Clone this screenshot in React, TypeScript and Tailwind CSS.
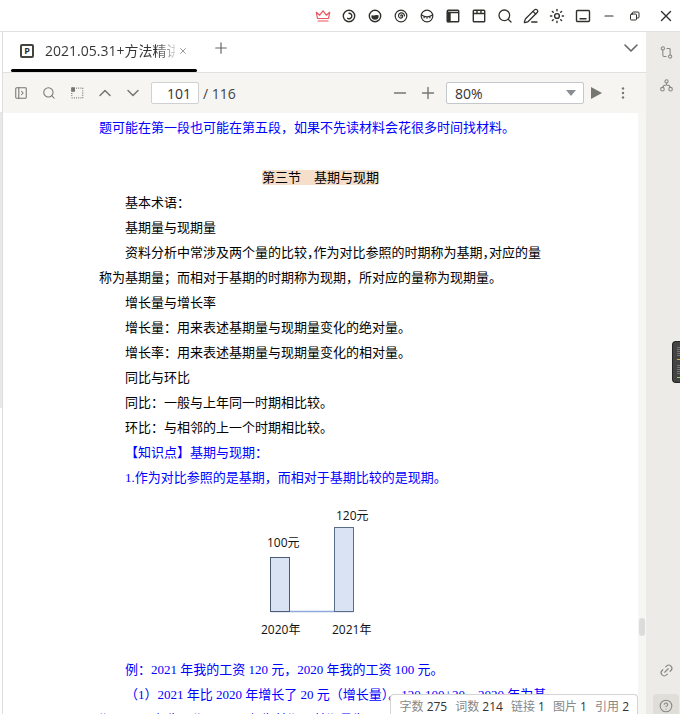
import React, { useState } from 'react';
import { ChevronDown, ChevronUp, CircleHelp, Link2, PencilLine, Plus, Search, X } from 'lucide-react';

interface IconProps {
    children: React.ReactNode;
    size?: number;
    stroke?: number;
}

interface IconButtonProps {
    label: string;
    children: React.ReactNode;
    className?: string;
}

// 16x16 line drawing that takes the colour of its button
function Icon({ children, size = 16, stroke = 1.4 }: IconProps) {
    return (
        <svg
            width={size}
            height={size}
            viewBox="0 0 16 16"
            fill="none"
            stroke="currentColor"
            strokeWidth={stroke}
            strokeLinecap="round"
            strokeLinejoin="round"
        >
            {children}
        </svg>
    );
}

function IconButton({ label, children, className = '' }: IconButtonProps) {
    return (
        <button
            type="button"
            aria-label={label}
            title={label}
            className={`flex shrink-0 items-center justify-center ${className}`}
        >
            {children}
        </button>
    );
}

function TitleBar() {
    return (
        <header className="flex h-8 shrink-0 items-center justify-end border-b border-[#e0e0e0] bg-white pr-px text-[#30302c]">
            <IconButton label="会员" className="w-[26px] text-[#e8555c]">
                <Icon stroke={1.2}>
                    <path d="M2.500 10.500 1.300 4.300l3.400 2.900L8 2.800l3.300 4.400 3.400-2.900-1.200 6.200zM3 13h10" />
                </Icon>
            </IconButton>
            <IconButton label="夜间" className="w-[26px]">
                <Icon>
                    <circle cx="8" cy="8" r="5.700" />
                    <path d="M8 5.300a2.700 2.700 0 1 1-1.300 5" />
                </Icon>
            </IconButton>
            <IconButton label="半屏" className="w-[26px]">
                <Icon>
                    <circle cx="8" cy="8" r="5.700" />
                    <path d="M5 8q1.500.6 3 0t3 0a3 3 0 0 1-6 0z" fill="currentColor" />
                </Icon>
            </IconButton>
            <IconButton label="专注" className="w-[26px]">
                <Icon stroke={1.2}>
                    <circle cx="8" cy="8" r="5.800" />
                    <path d="M8 8.200c-.8-1.200.8-1.800 1.400-.8 1 1.600-.8 3.200-2.400 2.600-2.200-.8-2-4.500.8-5.100 2-.4 3.600 1 3.700 2.900" />
                </Icon>
            </IconButton>
            <IconButton label="护眼" className="w-[26px]">
                <Icon stroke={1.2}>
                    <circle cx="8" cy="8" r="5.800" />
                    <path d="M2.500 7q5.500 3.500 11 0M5.500 8.500l-.5 1.300M8 8.800v1.400M10.500 8.500l.5 1.300" />
                </Icon>
            </IconButton>
            <IconButton label="侧栏" className="w-[26px]">
                <Icon>
                    <rect x="2.300" y="2.300" width="11.400" height="11.400" rx=".8" />
                    <path d="M2.500 4.500h11" />
                    <path d="M2.500 4.500h2.500v9H2.500z" fill="currentColor" />
                </Icon>
            </IconButton>
            <IconButton label="多标签" className="w-[26px]">
                <Icon>
                    <rect x="2.300" y="2.300" width="11.400" height="11.400" rx=".8" />
                    <path d="M2.500 5.500h11M6 2.500v2.800M10 2.500v2.800" />
                </Icon>
            </IconButton>
            <IconButton label="搜索" className="w-[26px]">
                <Search size={16} strokeWidth={1.9} />
            </IconButton>
            <IconButton label="编辑" className="w-[26px]">
                <PencilLine size={16} strokeWidth={1.9} />
            </IconButton>
            <IconButton label="亮度" className="w-[26px]">
                <Icon>
                    <circle cx="8" cy="8" r="2.400" />
                    <path d="M8 1.500v1.300M8 13.200v1.300M1.500 8h1.300M13.200 8h1.300M3.400 3.400l.9.9M11.700 11.700l.9.9M3.400 12.600l.9-.9M11.700 4.300l.9-.9" />
                </Icon>
            </IconButton>
            <IconButton label="底栏" className="w-[26px]">
                <Icon>
                    <rect x="1.500" y="2.500" width="13" height="11" rx="1" />
                    <path d="M5 10.800h6" />
                </Icon>
            </IconButton>
            <IconButton label="最小化" className="w-[26px]">
                <Icon stroke={1.2}>
                    <path d="M4 8h8" />
                </Icon>
            </IconButton>
            <IconButton label="还原" className="w-[26px]">
                <Icon stroke={1}>
                    <rect x="3.500" y="6" width="6" height="6" rx="1" />
                    <path d="M5.500 6V5q0-1 1-1h4.500q1 0 1 1v4q0 1-1 1h-1.500" />
                </Icon>
            </IconButton>
            <IconButton label="关闭" className="ml-[5px] w-[26px]">
                <Icon>
                    <path d="m3.500 3.500 9 9M12.500 3.500l-9 9" />
                </Icon>
            </IconButton>
        </header>
    );
}

function TabBar() {
    return (
        <div className="flex h-10 shrink-0 items-stretch bg-white pl-2">
            <div className="flex w-[186px] flex-col">
                <div className="flex flex-1 items-center pr-[6px] pl-[9px]">
                    <span className="flex size-[14px] shrink-0 items-center justify-center rounded-xs border-2 border-[#44443f] text-[9px] leading-none font-bold text-[#30302c]">
                        P
                    </span>
                    <span className="ml-[11px] flex-1 overflow-hidden bg-linear-to-r from-[#333] from-85% to-[#ddd] bg-clip-text text-[14px] whitespace-nowrap text-transparent">
                        2021.05.31+方法精讲
                    </span>
                    <IconButton label="关闭标签" className="w-4 text-[#888]">
                        <X size={10} />
                    </IconButton>
                </div>
                <div className="h-[3px] rounded-full bg-black" />
            </div>
            <IconButton label="新建标签" className="mb-2 ml-3 w-6 text-[#666]">
                <Plus size={18} strokeWidth={1.6} />
            </IconButton>
            <IconButton label="全部标签" className="mr-[3px] mb-2 ml-auto w-6 text-[#666]">
                <ChevronDown size={24} strokeWidth={1.6} />
            </IconButton>
        </div>
    );
}

function Toolbar() {
    const [page, setPage] = useState('101');

    return (
        <div className="flex h-[41px] shrink-0 items-center border-t border-[#dfe0e0] bg-[#f6f5f2] pr-[13px] pl-1 text-[#777772]">
            <IconButton label="目录" className="w-7">
                <Icon size={14} stroke={1.2}>
                    <rect x="2" y="2" width="12" height="12" rx="1" />
                    <path d="M5.500 2v12M8.500 6l2 2-2 2" />
                </Icon>
            </IconButton>
            <IconButton label="查找" className="w-7">
                <Search size={14} strokeWidth={1.8} />
            </IconButton>
            <IconButton label="截图" className="w-7">
                <Icon size={14} stroke={1.4}>
                    <path d="M2 2h3v4H2z" fill="currentColor" />
                    <path d="M7 2.500h8M14.500 2.500v11M2 8v5.500M2 13.500h13" strokeDasharray="1 1.500" strokeLinecap="butt" />
                </Icon>
            </IconButton>
            <IconButton label="上一页" className="w-7">
                <ChevronUp size={20} strokeWidth={1.8} />
            </IconButton>
            <IconButton label="下一页" className="w-7">
                <ChevronDown size={20} strokeWidth={1.8} />
            </IconButton>
            <input
                aria-label="页码"
                value={page}
                onChange={(e) => setPage(e.target.value)}
                className="ml-1 h-[22px] w-12 rounded-xs border border-[#cfd1d2] bg-white pr-[7px] text-right text-[14px] text-[#333]"
            />
            <span className="ml-1 text-[14px] text-[#444]">/ 116</span>
            <div className="ml-auto flex items-center">
                <IconButton label="缩小" className="w-7">
                    <Icon stroke={1.4}>
                        <path d="M2.500 8h11" />
                    </Icon>
                </IconButton>
                <IconButton label="放大" className="w-7">
                    <Icon stroke={1.4}>
                        <path d="M2.500 8h11M8 2.500v11" />
                    </Icon>
                </IconButton>
                <div className="relative ml-1">
                    <select
                        aria-label="缩放"
                        defaultValue="80%"
                        className="h-[22px] w-[138px] appearance-none rounded-xs border border-[#c4c8cc] bg-white pl-2 text-[14px] text-[#333]"
                    >
                        <option>80%</option>
                        <option>100%</option>
                        <option>120%</option>
                    </select>
                    <svg className="pointer-events-none absolute top-[9px] right-2" width="10" height="6" viewBox="0 0 10 6">
                        <path d="M0 0h10L5 6z" fill="#8a8e92" />
                    </svg>
                </div>
                <IconButton label="朗读" className="w-6">
                    <svg width="12" height="12" viewBox="0 0 12 12">
                        <path d="M1 0 12 6 1 12z" fill="currentColor" />
                    </svg>
                </IconButton>
                <IconButton label="更多" className="ml-[5px] w-5">
                    <svg width="4" height="12" viewBox="0 0 4 12" fill="currentColor">
                        <circle cx="2" cy="1.500" r="1.200" />
                        <circle cx="2" cy="6" r="1.200" />
                        <circle cx="2" cy="10.500" r="1.200" />
                    </svg>
                </IconButton>
            </div>
        </div>
    );
}

// comma set in half the usual width
function HalfComma() {
    return <span className="[font-feature-settings:'halt']">，</span>;
}

function SalaryChart() {
    return (
        <svg
            width="120"
            height="132"
            viewBox="0 0 120 132"
            role="img"
            aria-label="2020年100元，2021年120元"
            className="mt-4 ml-[158px] font-['Open_Sans','Noto_Sans_CJK_SC',sans-serif] text-[12px]"
        >
            <path d="M14 105.500h82" stroke="#8faadc" strokeWidth="1.500" />
            <rect x="13.500" y="51.500" width="19" height="54" fill="#dae3f3" stroke="#4d5b73" />
            <rect x="77.500" y="21.500" width="19" height="84" fill="#dae3f3" stroke="#5a6c88" />
            <text x="10" y="41" fill="#111">100元</text>
            <text x="79" y="14" fill="#111">120元</text>
            <text x="4" y="128" fill="#111">2020年</text>
            <text x="75" y="128" fill="#111">2021年</text>
        </svg>
    );
}

function Document() {
    return (
        <main className="min-w-0 flex-1 overflow-hidden bg-white px-24 font-['Liberation_Serif','Noto_Sans_CJK_SC',serif] text-[13px] leading-[25px] whitespace-nowrap text-black">
            <p className="mt-[2px] text-[#0000ff]">题可能在第一段也可能在第五段，如果不先读材料会花很多时间找材料。</p>
            <h1 className="mt-[25px] text-center">
                <span className="rounded-xs bg-[#f6dfca]">第三节　基期与现期</span>
            </h1>
            <div className="pl-[26px]">
                <p>基本术语：</p>
                <p>基期量与现期量</p>
                <p>
                    资料分析中常涉及两个量的比较<HalfComma />作为对比参照的时期称为基期<HalfComma />对应的量
                </p>
            </div>
            <p>称为基期量；而相对于基期的时期称为现期，所对应的量称为现期量。</p>
            <div className="pl-[26px]">
                <p>增长量与增长率</p>
                <p>增长量：用来表述基期量与现期量变化的绝对量。</p>
                <p>增长率：用来表述基期量与现期量变化的相对量。</p>
                <p>同比与环比</p>
                <p>同比：一般与上年同一时期相比较。</p>
                <p>环比：与相邻的上一个时期相比较。</p>
                <p className="text-[#0000ff]">【知识点】基期与现期：</p>
                <p className="text-[#0000ff]">1.作为对比参照的是基期，而相对于基期比较的是现期。</p>
            </div>
            <SalaryChart />
            <div className="mt-[19px] text-[#0000ff]">
                <p className="pl-[26px]">例：2021 年我的工资 120 元，2020 年我的工资 100 元。</p>
                <p className="pl-[26px]">（1）2021 年比 2020 年增长了 20 元（增长量）。120-100+20，2020 年为基</p>
                <p>期，2021 年为现期，2020 年为基期，基期量为</p>
            </div>
        </main>
    );
}

const COUNTS = [
    { name: '字数', value: 275 },
    { name: '词数', value: 214 },
    { name: '链接', value: 1 },
    { name: '图片', value: 1 },
    { name: '引用', value: 2 },
];

function CountBar() {
    return (
        <div className="absolute right-2 bottom-0 flex h-5 items-start gap-2 overflow-hidden rounded-t border border-b-0 border-[#d4d4d4] bg-white pt-1 pr-2 pl-2 text-[12px] leading-4 whitespace-nowrap text-[#888]">
            {COUNTS.map((count) => (
                <span key={count.name}>
                    {count.name} <span className="text-[#333]">{count.value}</span>
                </span>
            ))}
        </div>
    );
}

function SideRail() {
    return (
        <aside className="relative flex w-[34px] shrink-0 flex-col items-center bg-[#ecebe7] pl-[6px] text-[#888883]">
            <IconButton label="反向链接" className="mt-3 h-4">
                <Icon size={13} stroke={1.3}>
                    <circle cx="3.500" cy="3" r="2" />
                    <circle cx="12.500" cy="13" r="2" />
                    <path d="M3.500 5v6.500q0 1.500 1.500 1.500h2.500M12.500 11V4.500q0-1.500-1.500-1.500H8.500" />
                </Icon>
            </IconButton>
            <IconButton label="关系图" className="mt-[17px] h-4">
                <Icon size={13} stroke={1.3}>
                    <circle cx="8" cy="3" r="2" />
                    <circle cx="3" cy="12.500" r="2.200" />
                    <circle cx="13" cy="12.500" r="2.200" />
                    <path d="M8 5v2.500M3.500 10q.5-2.500 4.500-2.500t4.500 2.500" />
                </Icon>
            </IconButton>
            <IconButton label="链接" className="mt-auto h-4">
                <Link2 size={15} strokeWidth={1.8} className="-rotate-45" />
            </IconButton>
            <IconButton label="帮助" className="mt-4 h-5 w-[26px] rounded-t bg-[#dfded9] pt-1">
                <CircleHelp size={14} strokeWidth={1.8} />
            </IconButton>
            <div className="absolute top-[309px] right-0 flex h-[42px] w-2 flex-col justify-between rounded-l border border-r-0 border-[#252525] bg-[#444] py-1 pl-1">
                <svg width="4" height="14" viewBox="0 0 4 14">
                    <path d="M0 1.500h4M0 3.500h4M0 5.500h4M0 7.500h4M0 9.500h4" stroke="#777" />
                    <path d="M0 13.500h4" stroke="#f5a623" />
                </svg>
                <svg width="4" height="14" viewBox="0 0 4 14">
                    <path d="M0 1.500h4M0 3.500h4M0 5.500h4M0 7.500h4M0 9.500h4" stroke="#777" />
                    <path d="M0 13.500h4" stroke="#8ee03c" />
                </svg>
            </div>
        </aside>
    );
}

export default function App() {
    return (
        <div className="flex h-screen flex-col overflow-hidden bg-white font-['Open_Sans','Noto_Sans_CJK_SC',sans-serif]">
            <TitleBar />
            <div className="flex min-h-0 flex-1">
                <div className="w-[3px] shrink-0 border-r border-[#dedede] pt-20">
                    <div className="h-[296px] bg-[#e8e8e8]" />
                </div>
                <section className="relative flex min-w-0 flex-1 flex-col">
                    <TabBar />
                    <Toolbar />
                    <div className="flex min-h-0 flex-1">
                        <Document />
                        <div className="flex w-2 shrink-0 flex-col bg-[#f6f6f2] pt-[505px]">
                            <div className="mx-px h-[18px] rounded-full bg-[#dcdcda]" />
                        </div>
                    </div>
                    <CountBar />
                </section>
                <SideRail />
            </div>
        </div>
    );
}
